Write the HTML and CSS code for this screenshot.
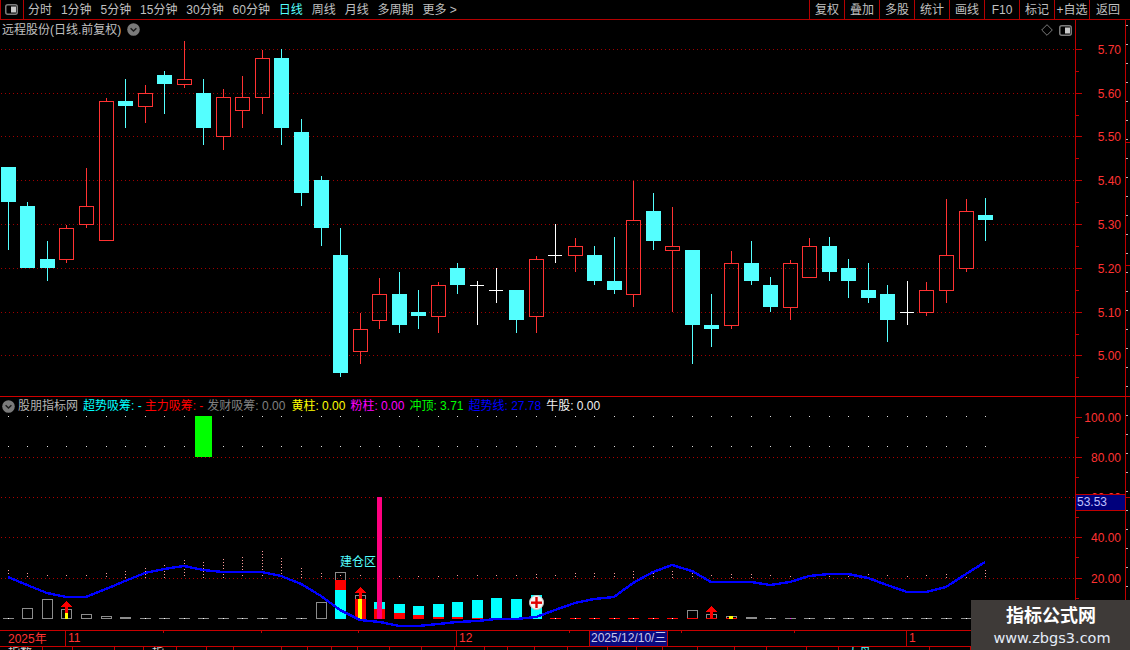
FILE: index.html
```html
<!DOCTYPE html>
<html lang="zh-CN">
<head>
<meta charset="utf-8">
<title>远程股份 日线</title>
<link rel="stylesheet" href="styles.css">
</head>
<body>
<div class="app">
  <header class="toolbar">
    <div class="layout-btn">
      <svg class="split-icon" viewBox="0 0 13 11"><rect x=".75" y=".75" width="11.5" height="9.5" rx="2"/><rect class="fill" x="6" y="2.5" width="5" height="6"/></svg>
    </div>
    <nav class="tabs">
      <span>分时</span><span>1分钟</span><span>5分钟</span><span>15分钟</span><span>30分钟</span><span>60分钟</span><span class="active">日线</span><span>周线</span><span>月线</span><span>多周期</span><span>更多 &gt;</span>
    </nav>
    <div class="actions">
      <span>复权</span><span>叠加</span><span>多股</span><span>统计</span><span>画线</span><span>F10</span><span>标记</span><span>+自选</span><span class="last">返回</span>
    </div>
  </header>

  <section class="panel panel-main">
    <div class="plot">
      <svg id="priceChart" class="chart" viewBox="0 20 1075 376"></svg>
      <div class="title-line">
        <span>远程股份(日线.前复权)</span>
        <svg class="chev" viewBox="0 0 13 13"><circle cx="6.5" cy="6.5" r="6.3"/><path d="M3.6 5.2 6.5 8.1 9.4 5.2"/></svg>
      </div>
      <div class="corner-tools">
        <svg class="diamond" viewBox="0 0 12 12"><path d="M6 .7 11.3 6 6 11.3 .7 6Z"/></svg>
        <svg class="split-icon" viewBox="0 0 13 11"><rect x=".75" y=".75" width="11.5" height="9.5" rx="2"/><rect class="fill" x="6" y="2.5" width="5" height="6"/></svg>
      </div>
    </div>
    <div id="priceAxis" class="axis"></div>
    <div id="priceStrip" class="strip"></div>
  </section>

  <section class="panel panel-ind">
    <div class="plot">
      <svg id="indChart" class="chart" viewBox="0 397 1075 233"></svg>
      <div class="legend">
        <svg class="chev" viewBox="0 0 13 13"><circle cx="6.5" cy="6.5" r="6.3"/><path d="M3.6 5.2 6.5 8.1 9.4 5.2"/></svg>
        <span class="lg-name">股朋指标网</span>
        <span class="lg-cyan">超势吸筹: -</span>
        <span class="lg-red">主力吸筹: -</span>
        <span class="lg-grey">发财吸筹: 0.00</span>
        <span class="lg-yellow">黄柱: 0.00</span>
        <span class="lg-pink">粉柱: 0.00</span>
        <span class="lg-green">冲顶: 3.71</span>
        <span class="lg-blue">超势线: 27.78</span>
        <span class="lg-white">牛股: 0.00</span>
      </div>
      <span class="zone-label">建仓区</span>
    </div>
    <div id="indAxis" class="axis"><div class="cursor-value">53.53</div></div>
    <div id="indStrip" class="strip"></div>
  </section>

  <section class="timebar">
    <span class="t-year">2025年</span>
    <span class="t-month t-11">11</span>
    <i class="t-tick tk1"></i><i class="t-tick tk2"></i><i class="t-tick tk3"></i>
    <span class="t-month t-12">12</span>
    <i class="t-tick tk4"></i>
    <span class="t-date">2025/12/10/三</span>
    <i class="t-tick tk5"></i><i class="t-tick tk6"></i>
    <span class="t-month t-1">1</span>
  </section>

  <footer id="statusRow" class="statusbar"></footer>

  <aside class="watermark">
    <strong>指标公式网</strong>
    <span>www.zbgs3.com</span>
  </aside>
</div>
<script src="chart.js"></script>
</body>
</html>
```

FILE: styles.css
```css
* { box-sizing: border-box; }
html, body { margin: 0; padding: 0; background: #000; }
body { font: 12px/1 "Liberation Sans", "Noto Sans CJK SC", sans-serif; color: #c0c0c0; overflow: hidden; }

.app { position: relative; width: 1130px; height: 650px; display: flex; flex-direction: column; overflow: hidden; background: #000; }

.toolbar { display: flex; flex: 0 0 20px; height: 20px; border-bottom: 1px solid #b40000; align-items: stretch; }
.layout-btn { width: 24px; border-left: 1px solid #b40000; border-right: 1px solid #b40000; display: flex; align-items: center; padding-left: 4px; }
.split-icon { width: 13px; height: 11px; display: block; }
.split-icon rect { fill: none; stroke: #7c7c7c; stroke-width: 1.5; }
.split-icon .fill { fill: #c8c8c8; stroke: none; }
.tabs { display: flex; align-items: center; gap: 8.9px; padding-left: 4px; flex: 1; white-space: nowrap; }
.tabs .active { color: #54ffff; }
.actions { display: flex; }
.actions span { width: 35px; border-left: 1px solid #b40000; display: flex; align-items: center; justify-content: center; white-space: nowrap; }
.actions .last { width: 41px; justify-content: flex-start; padding-left: 6px; }

.panel { display: flex; position: relative; }
.panel-main { flex: 0 0 377px; height: 377px; border-bottom: 1px solid #d00000; }
.panel-ind { flex: 0 0 233px; height: 233px; }
.plot { position: relative; width: 1075px; flex: none; }
.chart { display: block; width: 1075px; height: 100%; shape-rendering: crispEdges; }
.axis { position: relative; width: 51px; flex: none; border-left: 1px solid #c00000; border-right: 1px solid #c00000; }
.strip { position: relative; flex: 1; }

.axis-tick { position: absolute; left: 0; height: 1px; background: #c00000; }
.axis-tick.major { width: 6px; }
.axis-tick.minor { width: 3px; }
.axis-label { position: absolute; right: 4px; color: #ff3232; line-height: 14px; }
.strip-tick { position: absolute; left: 0; width: 2px; height: 1px; background: #b8b8b8; }
.strip-tick.red { width: 4px; background: #c00000; }

.title-line { position: absolute; left: 2px; top: 2px; display: flex; align-items: center; gap: 6px; height: 15px; white-space: nowrap; }
.chev { width: 13px; height: 13px; display: block; flex: none; }
.chev circle { fill: #7a7a7a; }
.chev path { fill: none; stroke: #1a1a1a; stroke-width: 1.4; }
.corner-tools { position: absolute; right: 3px; top: 4px; display: flex; align-items: center; gap: 6px; }
.diamond { width: 12px; height: 12px; display: block; }
.diamond path { fill: none; stroke: #7c7c7c; }

.legend { position: absolute; left: 2px; top: 2px; height: 14px; display: flex; align-items: center; white-space: nowrap; }
.legend span { margin-left: 5px; }
.legend .lg-name { margin-left: 3px; color: #b4b4b4; }
.legend .lg-cyan { margin-left: 5px; color: #00ffff; }
.legend .lg-red { margin-left: 3px; color: #ff0000; }
.legend .lg-grey { margin-left: 4px; color: #808080; }
.legend .lg-yellow { margin-left: 6px; color: #ffff00; }
.lg-pink { color: #ff00ff; }
.lg-green { color: #00ff00; }
.lg-blue { color: #0000ff; }
.lg-white { color: #f0f0f0; }

.zone-label { position: absolute; left: 340px; top: 159px; color: #54ffff; white-space: nowrap; }

.cursor-value { position: absolute; left: 0; right: 0; top: 97px; height: 17px; background: #00007c; border-top: 1px solid #c00000; border-bottom: 1px solid #c00000; color: #c0c0ff; line-height: 15px; padding-left: 1px; z-index: 2; }

.timebar { position: relative; flex: 0 0 17px; height: 17px; border-top: 1px solid #c80000; border-bottom: 1px solid #c80000; color: #ff3232; }
.t-year { position: absolute; left: 8px; top: 1px; line-height: 14px; }
.t-month { position: absolute; top: 0; bottom: 0; line-height: 15px; border-left: 1px solid #c00000; padding-left: 2px; }
.t-11 { left: 65px; }
.t-12 { left: 456px; }
.t-1 { left: 906px; }
.t-tick { position: absolute; top: 0; width: 1px; height: 2px; background: #c00000; }
.tk1 { left: 163px; } .tk2 { left: 261px; } .tk3 { left: 358px; }
.tk4 { left: 569px; } .tk5 { left: 681px; } .tk6 { left: 794px; }
.t-date { position: absolute; left: 589px; width: 79px; top: 0; bottom: 0; background: #0a0a80; border-left: 1px solid #c00000; border-right: 1px solid #c00000; color: #c8c8e8; line-height: 15px; padding-left: 1px; white-space: nowrap; z-index: 1; }

.statusbar { display: flex; flex: 1; overflow: hidden; }
.status-cell { flex: none; height: 3px; border-right: 1px solid #c00000; padding-left: 8px; overflow: hidden; line-height: 12px; white-space: nowrap; color: #d0d0d0; }
.status-cell.cyan { color: #54ffff; }

.watermark { position: absolute; right: 0; bottom: 0; width: 159px; height: 50px; background: #3e3a38; display: flex; flex-direction: column; align-items: center; color: #fff; z-index: 3; padding-top: 4px; }
.watermark strong { font-size: 18px; line-height: 24px; font-weight: 700; padding-left: 1px; }
.watermark span { font: 14.5px/18px "DejaVu Sans", sans-serif; color: #e4ecf8; margin-top: 1px; padding-left: 3px; }
```

FILE: chart.js
```js
(function () {
var NS = 'http://www.w3.org/2000/svg';
var CYAN = '#54ffff', RED = '#ff3232', WHITE = '#ffffff';

// x0, type (c/r/w), wick top, body top, body bottom, wick bottom
var candles = [
  [1,'c',167,167,202,250],[20,'c',202,206,268,268],[40,'c',241,259,268,281],[59,'r',225,228,260,263],
  [79,'r',168,206,225,228],[99,'r',98,101,241,241],[118,'c',79,101,106,128],[138,'r',85,93,107,123],
  [157,'c',71,75,84,114],[177,'r',41,79,85,88],[196,'c',79,93,128,145],[216,'r',89,97,137,150],
  [235,'r',76,97,111,128],[255,'r',50,58,98,114],[274,'c',49,58,128,145],[294,'c',119,132,193,206],
  [314,'c',176,180,228,246],[333,'c',228,255,373,377],[353,'r',313,329,352,364],[372,'r',278,294,321,329],
  [392,'c',272,294,325,333],[411,'c',290,312,316,329],[431,'r',282,285,317,333],[450,'c',263,268,285,294],
  [470,'w',281,285,285,325],[489,'w',268,290,290,303],[509,'c',290,290,320,333],[529,'r',256,259,317,333],
  [548,'w',224,255,255,263],[568,'r',238,246,256,272],[587,'c',246,255,281,285],[607,'c',237,281,290,294],
  [626,'r',181,220,295,307],[646,'c',193,211,241,250],[665,'r',207,246,251,312],[685,'c',250,250,325,364],
  [704,'c',294,325,329,347],[724,'r',251,263,326,329],[744,'c',241,263,281,285],[763,'c',277,285,307,312],
  [783,'r',260,263,308,320],[802,'r',238,246,278,278],[822,'c',237,246,272,281],[841,'c',259,268,281,298],
  [861,'c',263,290,298,303],[880,'c',285,294,320,342],[900,'w',281,312,312,325],[919,'r',282,290,313,316],
  [939,'r',199,255,291,303],[959,'r',199,211,269,272],[978,'c',198,215,220,241]
];

function el(parent, name, attrs) {
  var n = document.createElementNS(NS, name);
  for (var k in attrs) n.setAttribute(k, attrs[k]);
  parent.appendChild(n);
  return n;
}
function rect(p, x, y, w, h, fill) { return el(p, 'rect', { x: x, y: y, width: w, height: h, fill: fill }); }
function hDots(p, y, color, x2) {
  el(p, 'line', { x1: 1, x2: x2 || 1075, y1: y + .5, y2: y + .5, stroke: color, 'stroke-dasharray': '1 3' });
}

/* price chart */
var price = document.getElementById('priceChart');
[49, 93, 136, 180, 224, 268, 312, 355].forEach(function (y) { hDots(price, y, '#a00000'); });
candles.forEach(function (c) {
  var x = c[0], t = c[1], color = t === 'c' ? CYAN : t === 'r' ? RED : WHITE;
  if (c[3] > c[2]) rect(price, x + 7, c[2], 1, c[3] - c[2], color);
  if (c[5] > c[4]) rect(price, x + 7, c[4], 1, c[5] - c[4], color);
  if (t === 'c') rect(price, x, c[3], 15, c[4] - c[3], CYAN);
  else if (t === 'r') el(price, 'rect', { x: x + .5, y: c[3] + .5, width: 14, height: c[4] - c[3] - 1, fill: 'none', stroke: RED });
  else rect(price, x, c[3], 14, 1, WHITE);
});

/* indicator chart */
var ind = document.getElementById('indChart');
[457, 497, 537, 578].forEach(function (y) { hDots(ind, y, '#b00000'); });

candles.forEach(function (c) {
  var cx = c[0] + 7;
  rect(ind, cx, 416, 1, 1, '#e0e0e0');
  rect(ind, cx, 446, 1, 1, '#e0e0e0');
});
rect(ind, 195, 416, 17, 41, '#00ff00');

// pink dotted spikes: the top y of each, by candle
var spikes = [570,573,575,575,575,573,571,568,565,560,562,559,557,551,558,568,573,575,575,576,576,576,576,575,575,575,575,574,575,573,573,573,571,573,571,573,575,574,574,575,576,576,576,576,574,575,576,575,574,574,570];
spikes.forEach(function (top, i) {
  var cx = candles[i][0] + 7.5;
  el(ind, 'line', { x1: cx, x2: cx, y1: top, y2: 578, stroke: '#ff9c9c', 'stroke-dasharray': '1 2' });
});

// baseline dashes, with a dot under each candle
candles.forEach(function (c, i) {
  if (i === 17 || i === 18 || (i >= 19 && i <= 27)) return;
  var color = (i >= 28 && i <= 37) ? '#ff0000' : '#8c8c8c';
  if (i > 49) return;
  rect(ind, c[0] + 2, 618, 11, 1, color);
  rect(ind, c[0] + 7, 618, 1, 1, i === 40 ? '#ff00ff' : '#ffffff');
});

function hollow(i, top, bottomColor) {
  var x = candles[i][0] + 2;
  el(ind, 'rect', { x: x + .5, y: top + .5, width: 10, height: 618 - top, fill: 'none', stroke: '#8c8c8c' });
  if (bottomColor) rect(ind, x, 618, 11, 1, bottomColor);
}
function arrow(cx, tip, shaftEnd) {
  var h = shaftEnd - tip - 6;
  el(ind, 'path', { d: 'M' + (cx + .5) + ' ' + tip + 'l6 6h-4.5v' + h + 'h-3v-' + h + 'h-4.5z', fill: '#ff0000' });
}
function stack(i, parts) {
  var x = candles[i][0] + 2;
  parts.forEach(function (p) { rect(ind, x, p[0], 11, p[1] - p[0], p[2]); });
}
hollow(1, 608); hollow(2, 599); hollow(3, 609); hollow(4, 614); hollow(5, 616);
rect(ind, candles[6][0] + 2, 617, 11, 2, '#8c8c8c');
rect(ind, 65, 613, 3, 6, '#ffff00'); arrow(66, 601, 613);
hollow(16, 602);
hollow(17, 572); stack(17, [[580, 590, '#ff0000'], [590, 619, '#00ffff']]);
hollow(18, 595); stack(18, [[599, 619, '#ff0000']]);
rect(ind, 358, 599, 4, 20, '#ffff00'); arrow(360, 587, 599);
stack(19, [[602, 609, '#00ffff'], [609, 619, '#ff0000']]);
rect(ind, 377, 497, 5, 122, '#ff0080');
stack(20, [[604, 613, '#00ffff'], [613, 619, '#ff0000']]);
stack(21, [[606, 615, '#00ffff'], [615, 619, '#ff0000']]);
stack(22, [[604, 617, '#00ffff'], [617, 619, '#ff0000']]);
stack(23, [[602, 617, '#00ffff'], [617, 619, '#ff0000']]);
stack(24, [[600, 618, '#00ffff'], [618, 619, '#ff0000']]);
stack(25, [[598, 619, '#00ffff']]);
stack(26, [[599, 619, '#00ffff']]);
stack(27, [[595, 619, '#00ffff']]);
hollow(35, 610, '#ff0000');
hollow(36, 614, '#ff0000'); arrow(711, 606, 618);
hollow(37, 616, '#ff0000'); rect(ind, 729, 616, 4, 3, '#ffff00');
rect(ind, candles[38][0] + 2, 617, 11, 2, '#8c8c8c');

var blue = [[8,577],[27,585],[47,593],[66,597],[86,597],[106,589],[125,581],[145,573],[164,569],[184,566],[203,570],[223,572],[242,572],[262,572],[281,576],[301,584],[321,596],[340,610],[360,620],[380,622],[399,626],[418,626],[438,624],[457,622],[477,621],[496,619],[516,619],[536,617],[555,610],[575,603],[594,599],[614,597],[633,583],[653,572],[672,565],[692,571],[711,582],[731,582],[751,582],[770,585],[790,582],[809,576],[829,574],[848,574],[868,578],[887,585],[907,592],[926,592],[946,587],[966,574],[985,562]];
el(ind, 'polyline', { points: blue.join(' '), fill: 'none', stroke: '#0000ff', 'stroke-width': 2.4 });

// "+" badge
var badge = el(ind, 'g', { 'shape-rendering': 'auto' });
el(badge, 'circle', { cx: 536.5, cy: 602.5, r: 7, fill: '#f4f4f4', stroke: '#c8c8c8' });
rect(badge, 531, 601.5, 11, 2.4, '#e00000');
rect(badge, 535.3, 597, 2.4, 11, '#e00000');

/* axes */
function axis(id, topOffset, labels, minors) {
  var box = document.getElementById(id);
  labels.forEach(function (l) {
    var t = document.createElement('i');
    t.className = 'axis-tick major';
    t.style.top = (l[0] - topOffset) + 'px';
    box.appendChild(t);
    var s = document.createElement('span');
    s.className = 'axis-label';
    s.textContent = l[1];
    s.style.top = (l[0] - topOffset - 6) + 'px';
    box.appendChild(s);
  });
  minors.forEach(function (y) {
    var t = document.createElement('i');
    t.className = 'axis-tick minor';
    t.style.top = (y - topOffset) + 'px';
    box.appendChild(t);
  });
}
axis('priceAxis', 20,
  [[49,'5.70'],[93,'5.60'],[136,'5.50'],[180,'5.40'],[224,'5.30'],[268,'5.20'],[312,'5.10'],[355,'5.00']],
  [71,115,158,202,246,290,334,377]);
axis('indAxis', 397,
  [[417,'100.00'],[457,'80.00'],[497,'60.00'],[537,'40.00'],[578,'20.00']],
  [437,477,517,557,598,618]);

function strip(id, topOffset, ys, reds) {
  var box = document.getElementById(id);
  ys.forEach(function (y) {
    var t = document.createElement('i');
    t.className = 'strip-tick';
    t.style.top = (y - topOffset) + 'px';
    box.appendChild(t);
  });
  reds.forEach(function (y) {
    var t = document.createElement('i');
    t.className = 'strip-tick red';
    t.style.top = (y - topOffset) + 'px';
    box.appendChild(t);
  });
}
var ys1 = [], ys2 = [];
for (var y = 25; y < 395; y += 19) ys1.push(y);
for (var y2 = 415; y2 < 600; y2 += 19) ys2.push(y2);
strip('priceStrip', 20, ys1, [142, 265]);
strip('indStrip', 397, ys2, [497]);

/* cut-off status row */
var cuts = [43,73,115,144,177,207,234,282,308,332,358,390,422,455,485,508,535,568,608,637,663,698,735,767,807,839,930,971];
var labels = { 0: '指数', 4: '指', 26: '大盘' };
var row = document.getElementById('statusRow');
var prev = 0;
cuts.forEach(function (x, i) {
  var d = document.createElement('div');
  d.className = 'status-cell' + (i === 26 ? ' cyan' : '');
  d.style.width = (x - prev) + 'px';
  d.textContent = labels[i] || '';
  row.appendChild(d);
  prev = x;
});
})();
```
